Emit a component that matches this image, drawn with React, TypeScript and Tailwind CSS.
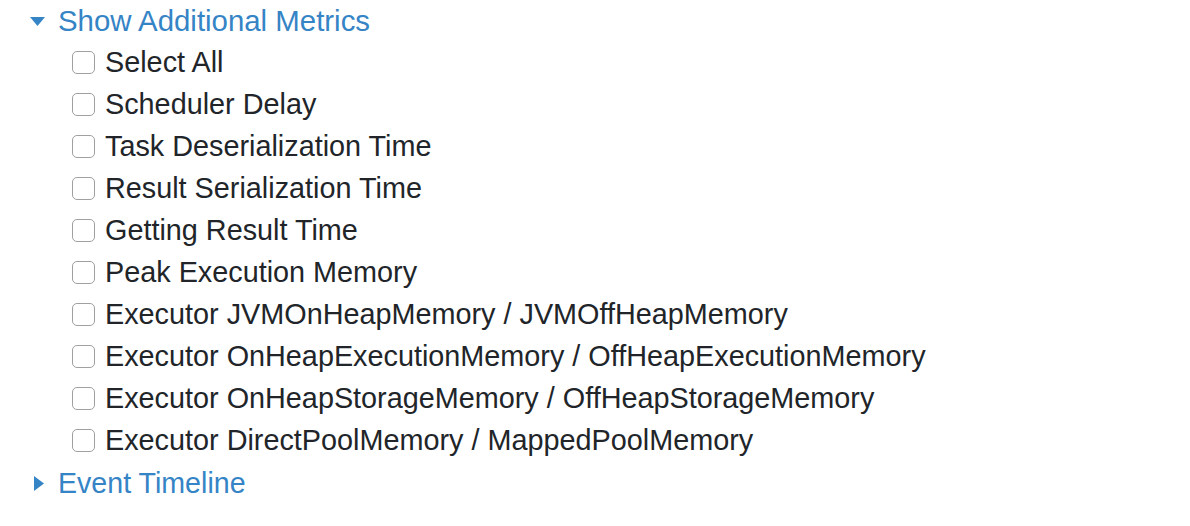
import React from "react";

const items = [
  "Select All",
  "Scheduler Delay",
  "Task Deserialization Time",
  "Result Serialization Time",
  "Getting Result Time",
  "Peak Execution Memory",
  "Executor JVMOnHeapMemory / JVMOffHeapMemory",
  "Executor OnHeapExecutionMemory / OffHeapExecutionMemory",
  "Executor OnHeapStorageMemory / OffHeapStorageMemory",
  "Executor DirectPoolMemory / MappedPoolMemory",
];

export default function App() {
  return (
    <div
      className="w-[1190px] h-[526px] bg-white text-[28.8px] text-[#212529] overflow-hidden"
      style={{ fontFamily: '"Liberation Sans", Arial, sans-serif' }}
    >
      <div className="flex items-center h-[41px] pt-[1px] pl-[30px] text-[#3584c6] text-[29.4px]">
        <svg width="15" height="9" viewBox="0 0 15 9" className="mr-[13px]">
          <polygon points="0,0 15,0 7.5,9" fill="#3584c6" />
        </svg>
        <span>Show Additional Metrics</span>
      </div>
      <div className="flex flex-col pl-[72px]">
        {items.map((t) => (
          <div key={t} className="flex items-center h-[42px] pt-[2px]">
            <span className="w-[23px] h-[23px] rounded-[5px] border border-[#a0a0a0] bg-white mr-[10px] shrink-0 -mt-[2px]" />
            <span>{t}</span>
          </div>
        ))}
      </div>
      <div className="flex items-center h-[42px] pt-[2px] pl-[34px] text-[#3584c6] text-[28.6px]">
        <svg width="10" height="15" viewBox="0 0 10 15" className="mr-[14px]">
          <polygon points="0,0 10,7.5 0,15" fill="#3584c6" />
        </svg>
        <span>Event Timeline</span>
      </div>
    </div>
  );
}
